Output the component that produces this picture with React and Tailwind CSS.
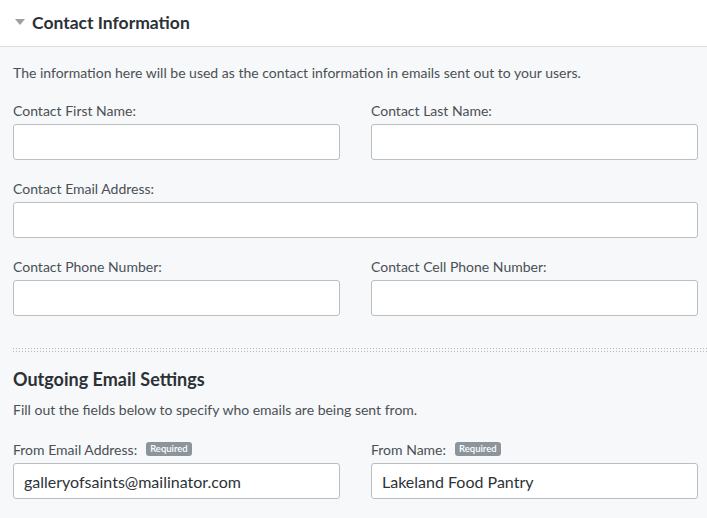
import React from 'react';

const font = { fontFamily: 'Lato, "Open Sans", sans-serif' };

const Field = ({ label, value, required }) => (
  <div className="flex flex-col">
    <label className="flex items-center h-[18px] mb-[5px] text-[14px] text-[#4a5056]">
      {label}
      {required && (
        <span className="ml-[9px] rounded-[3px] bg-[#8d959c] px-[4px] h-[14px] leading-[14px] text-[9.5px] font-semibold text-white">
          Required
        </span>
      )}
    </label>
    <input
      defaultValue={value}
      className="h-[36px] w-full rounded-[3px] border border-[#b9bec3] bg-white px-[10px] text-[16px] text-[#2d3338] outline-none"
    />
  </div>
);

export default function App() {
  return (
    <div className="min-h-screen w-[707px] bg-[#f7f8f9]" style={font}>
      {/* header */}
      <div className="flex h-[47px] items-center border-b border-[#dcdfe2] bg-white pl-[15px]">
        <svg width="10" height="6" viewBox="0 0 10 6" className="mr-[7px] mt-[-3px]">
          <path d="M0 0 L10 0 L5 6 Z" fill="#9aa0a6" />
        </svg>
        <h2 className="text-[17.5px] font-bold text-[#2b3137]">Contact Information</h2>
      </div>

      <div className="pl-[13px] pr-[9px] pt-[17px]">
        <p className="h-[18px] text-[14px] leading-[18px] text-[#4a5056]">
          The information here will be used as the contact information in emails sent out to your users.
        </p>

        <div className="mt-[19px] grid grid-cols-2 gap-x-[31px] gap-y-[19px]">
          <Field label="Contact First Name:" />
          <Field label="Contact Last Name:" />
          <div className="col-span-2">
            <Field label="Contact Email Address:" />
          </div>
          <Field label="Contact Phone Number:" />
          <Field label="Contact Cell Phone Number:" />
        </div>
      </div>

      {/* dotted separator */}
      <div className="ml-[12px] mt-[31px] h-[5px] bg-[radial-gradient(circle,#b3b8bd_0.7px,transparent_0.9px)] bg-[length:3px_3px]" />

      <div className="pl-[13px] pr-[9px] pt-[15px] pb-[20px]">
        <h3 className="h-[24px] text-[18px] font-bold leading-[24px] text-[#2b3137]">Outgoing Email Settings</h3>
        <p className="mt-[10px] h-[18px] text-[14px] leading-[18px] text-[#4a5056]">
          Fill out the fields below to specify who emails are being sent from.
        </p>
        <div className="mt-[21px] grid grid-cols-2 gap-x-[31px]">
          <Field label="From Email Address:" value="galleryofsaints@mailinator.com" required />
          <Field label="From Name:" value="Lakeland Food Pantry" required />
        </div>
      </div>
    </div>
  );
}
